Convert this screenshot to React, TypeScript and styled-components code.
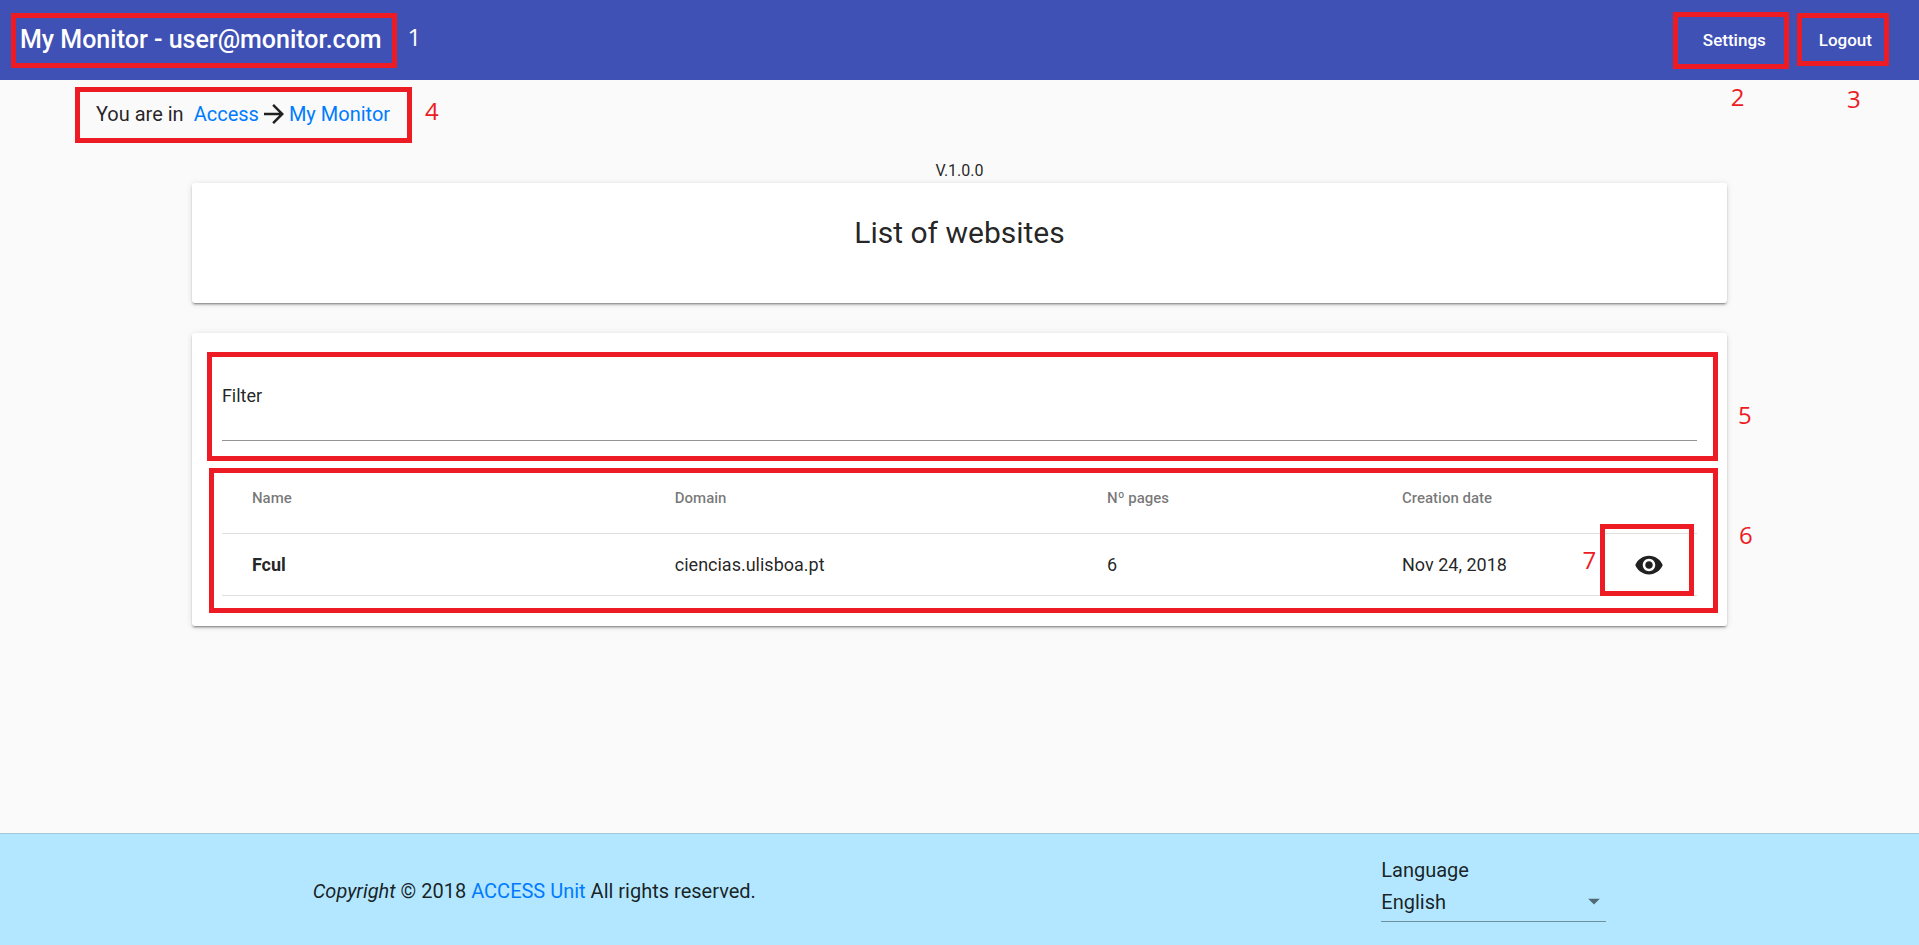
import React from "react";
import styled, { createGlobalStyle } from "styled-components";
import { MdArrowForward, MdArrowDropDown, MdVisibility } from "react-icons/md";

const GlobalStyle = createGlobalStyle`
  *, *::before, *::after { box-sizing: border-box; }
  body {
    margin: 0;
    background: #fafafa;
    color: rgba(0, 0, 0, 0.87);
    font-family: Roboto, "Liberation Sans", sans-serif;
    font-size: 20px;
  }
  a { color: #007bff; text-decoration: none; }
`;

const Page = styled.div`
  display: flex;
  flex-direction: column;
  min-height: 100vh;
`;

const TopBar = styled.header`
  display: flex;
  align-items: center;
  justify-content: space-between;
  height: 80px;
  padding: 0 27px 0 20px;
  background: #3f51b5;
  color: #fff;
`;

const Brand = styled.h1`
  position: relative;
  margin: 0;
  font-size: 25px;
  line-height: 30px;
  font-weight: 500;
`;

const Actions = styled.div`
  display: flex;
  gap: 13px;
`;

const Action = styled.button`
  position: relative;
  height: 46px;
  padding: 0 20px;
  border: 0;
  background: transparent;
  color: #fff;
  font-family: inherit;
  font-size: 17px;
  font-weight: 500;
  cursor: pointer;
`;

const Main = styled.main`
  display: flex;
  flex: 1;
  flex-direction: column;
  align-items: flex-start;
`;

const Breadcrumbs = styled.nav`
  position: relative;
  display: flex;
  align-items: center;
  margin: 19px 0 0 5%;
  line-height: 30px;
`;

const Lead = styled.span`
  margin-right: 10px;
`;

const Arrow = styled(MdArrowForward)`
  width: 30px;
  height: 30px;
`;

const Content = styled.div`
  display: flex;
  flex-direction: column;
  width: 80%;
  margin: 30px auto 0;
`;

const Version = styled.p`
  margin: 0;
  font-size: 16px;
  line-height: 24px;
  text-align: center;
`;

const Card = styled.section`
  padding: 30px;
  border-radius: 3px;
  background: #fff;
  box-shadow: 0 3px 1px -2px rgba(0, 0, 0, 0.2), 0 2px 2px 0 rgba(0, 0, 0, 0.2),
    0 1px 6px 0 rgba(0, 0, 0, 0.12);

  & + & {
    margin-top: 30px;
  }
`;

const CardTitle = styled.h2`
  margin: 0 0 20px;
  font-size: 30px;
  line-height: 40px;
  font-weight: 400;
  text-align: center;
`;

const Field = styled.div`
  position: relative;
  display: flex;
  flex-direction: column;
  padding-top: 18px;
  margin-bottom: 22px;
  font-size: 18px;
  line-height: 30px;
`;

const FilterInput = styled.input`
  height: 30px;
  padding: 0;
  border: 0;
  border-bottom: 1px solid #949494;
  outline: none;
  background: transparent;
  color: inherit;
  font: inherit;
`;

const TableWrap = styled.div`
  position: relative;
`;

const Table = styled.table`
  width: 100%;
  border-collapse: separate;
  border-spacing: 0;
  table-layout: fixed;
  font-size: 18px;
  text-align: left;
`;

const HeadCell = styled.th<{ $width: string }>`
  width: ${(p) => p.$width};
  height: 71px;
  padding: 0;
  border-bottom: 1px solid #e0e0e0;
  color: rgba(0, 0, 0, 0.54);
  font-size: 15px;
  font-weight: 500;

  &:first-child {
    padding-left: 30px;
  }
`;

const Cell = styled.td<{ $strong?: boolean; $center?: boolean }>`
  height: 62px;
  padding: 0;
  border-bottom: 1px solid #e0e0e0;
  font-weight: ${(p) => (p.$strong ? 700 : 400)};
  text-align: ${(p) => (p.$center ? "center" : "left")};

  &:first-child {
    padding-left: 30px;
  }
`;

const IconButton = styled.button`
  position: relative;
  display: inline-flex;
  align-items: center;
  justify-content: center;
  width: 50px;
  height: 50px;
  padding: 0;
  border: 0;
  background: transparent;
  color: rgba(0, 0, 0, 0.87);
  vertical-align: middle;
  cursor: pointer;

  svg {
    width: 30px;
    height: 30px;
  }
`;

const Footer = styled.footer`
  display: flex;
  align-items: center;
  justify-content: space-around;
  padding: 20px 0 23px;
  border-top: 1px solid #9fc8dc;
  background: #b3e7ff;
`;

const Copyright = styled.p`
  margin: 0;
  padding-top: 6px;
  line-height: 28px;
`;

const Language = styled.div`
  display: flex;
  flex-direction: column;
  width: 225px;
  line-height: 32px;
`;

const SelectWrap = styled.div`
  position: relative;
  color: rgba(0, 0, 0, 0.54);
`;

const Select = styled.select`
  display: block;
  width: 100%;
  height: 36px;
  padding: 0 30px 3px 0;
  border: 0;
  border-bottom: 1px solid #6f8f9e;
  border-radius: 0;
  outline: none;
  appearance: none;
  background: transparent;
  color: rgba(0, 0, 0, 0.87);
  font: inherit;
`;

const Caret = styled(MdArrowDropDown)`
  position: absolute;
  top: 1px;
  right: -2px;
  width: 28px;
  height: 28px;
  pointer-events: none;
`;

const Frame = styled.span<{ $inset: string }>`
  position: absolute;
  inset: ${(p) => p.$inset};
  border: 5px solid #ed1c24;
  pointer-events: none;
`;

const FrameNumber = styled.span<{ $x: string; $y: string; $light?: boolean }>`
  position: absolute;
  left: ${(p) => p.$x};
  top: ${(p) => p.$y};
  color: ${(p) => (p.$light ? "#fff" : "#ed1c24")};
  font-family: "Open Sans", "Noto Sans", sans-serif;
  font-size: 24px;
  font-weight: 400;
  line-height: 24px;
`;

type CalloutProps = { n: number; inset: string; x: string; y: string; light?: boolean };

function Callout({ n, inset, x, y, light }: CalloutProps) {
  return (
    <Frame $inset={inset} aria-hidden="true">
      <FrameNumber $x={x} $y={y} $light={light}>
        {n}
      </FrameNumber>
    </Frame>
  );
}

const columns = [
  { label: "Name", width: "30.7%" },
  { label: "Domain", width: "29.3%" },
  { label: "Nº pages", width: "20%" },
  { label: "Creation date", width: "auto" },
  { label: "", width: "97px" },
];

const websites = [
  { name: "Fcul", domain: "ciencias.ulisboa.pt", pages: 6, created: "Nov 24, 2018" },
];

export default function App() {
  return (
    <Page>
      <GlobalStyle />
      <TopBar>
        <Brand>
          My Monitor - user@monitor.com
          <Callout n={1} inset="-12px -15px -13px -9px" x="calc(100% + 16px)" y="7px" light />
        </Brand>
        <Actions>
          <Action type="button">
            Settings
            <Callout n={2} inset="-5px -3px -6px -10px" x="50%" y="calc(100% + 21px)" />
          </Action>
          <Action type="button">
            Logout
            <Callout n={3} inset="-4px 3px -3px -2px" x="55%" y="calc(100% + 26px)" />
          </Action>
        </Actions>
      </TopBar>

      <Main>
        <Breadcrumbs aria-label="Breadcrumb">
          <Lead>You are in</Lead>
          <a href="#access">Access</a>
          <Arrow aria-hidden="true" />
          <a href="#my-monitor">My Monitor</a>
          <Callout n={4} inset="-12px -22px -14px -21px" x="calc(100% + 18px)" y="7px" />
        </Breadcrumbs>

        <Content>
          <Version>V.1.0.0</Version>
          <Card>
            <CardTitle>List of websites</CardTitle>
          </Card>
          <Card>
            <Field>
              <label htmlFor="filter">Filter</label>
              <FilterInput id="filter" type="text" />
              <Callout n={5} inset="-11px -21px -20px -15px" x="calc(100% + 25px)" y="46px" />
            </Field>
            <TableWrap>
              <Table>
                <thead>
                  <tr>
                    {columns.map((c) => (
                      <HeadCell key={c.label} scope="col" $width={c.width}>
                        {c.label}
                      </HeadCell>
                    ))}
                  </tr>
                </thead>
                <tbody>
                  {websites.map((w) => (
                    <tr key={w.name}>
                      <Cell $strong>{w.name}</Cell>
                      <Cell>{w.domain}</Cell>
                      <Cell>{w.pages}</Cell>
                      <Cell>{w.created}</Cell>
                      <Cell $center>
                        <IconButton type="button" aria-label={`View ${w.name}`}>
                          <MdVisibility />
                          <Callout n={7} inset="-16px -20px -6px -24px" x="-22px" y="19px" />
                        </IconButton>
                      </Cell>
                    </tr>
                  ))}
                </tbody>
              </Table>
              <Callout n={6} inset="5px -21px -17px -13px" x="calc(100% + 26px)" y="50px" />
            </TableWrap>
          </Card>
        </Content>
      </Main>

      <Footer>
        <Copyright>
          <em>Copyright</em> © 2018 <a href="#access-unit">ACCESS Unit</a> All rights reserved.
        </Copyright>
        <Language>
          <label htmlFor="language">Language</label>
          <SelectWrap>
            <Select id="language" defaultValue="en">
              <option value="en">English</option>
              <option value="pt">Português</option>
            </Select>
            <Caret aria-hidden="true" />
          </SelectWrap>
        </Language>
      </Footer>
    </Page>
  );
}
